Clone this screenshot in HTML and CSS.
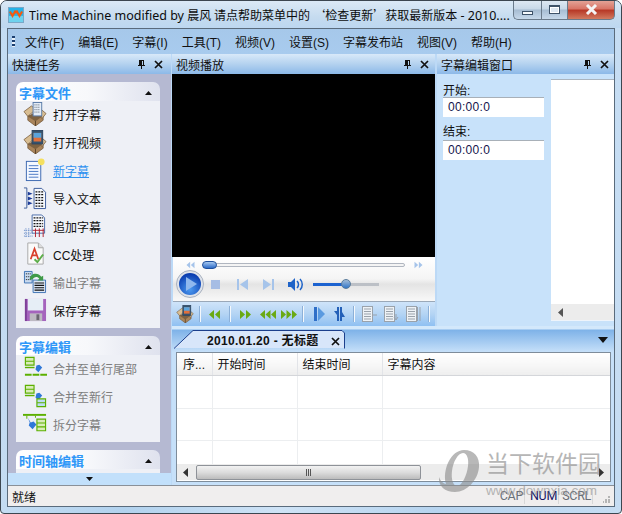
FILE: index.html
```html
<!DOCTYPE html>
<html lang="zh">
<head>
<meta charset="utf-8">
<title>Time Machine</title>
<link rel="stylesheet" href="styles.css">
</head>
<body>
<svg class="defs" width="0" height="0">
  <defs>
    <symbol id="pin" viewBox="0 0 9 11"><path d="M2 1h5v5H6V2H5v4H2zM1 6h7v1H1zM4 7h1v3H4z" fill="#111"/></symbol>
    <symbol id="cross" viewBox="0 0 9 9"><path d="M1 1l7 7M8 1L1 8" stroke="#111" stroke-width="1.7" fill="none"/></symbol>
    <symbol id="up" viewBox="0 0 7 4"><path d="M3.500 0L7 4H0z" fill="#111"/></symbol>
    <symbol id="box" viewBox="0 0 25 25">
      <path d="M5 13l8 5 8-5v6l-8 6-8-6z" fill="#a9845a" stroke="#6a4e2e" stroke-width=".7"/>
      <path d="M13 18v7" stroke="#5b4226"/>
      <path d="M1 10l8-6 4 4-8 7z" fill="#d8bd92" stroke="#6a4e2e" stroke-width=".7"/>
      <path d="M24 12l-6-5-4 5 6 5z" fill="#d8bd92" stroke="#6a4e2e" stroke-width=".7"/>
      <path d="M5 15l8-5 7 5-7 5z" fill="#7d6140"/>
    </symbol>
    <symbol id="double-left" viewBox="0 0 11 11"><path d="M5 1v9L0 5.500zM11 1v9L6 5.500z"/></symbol>
    <symbol id="double-right" viewBox="0 0 11 11"><path d="M0 1v9l5-4.500zM6 1v9l5-4.500z"/></symbol>
    <symbol id="triple-left" viewBox="0 0 16 11"><path d="M5 1v9L0 5.500zM10.500 1v9l-5-4.500zM16 1v9l-5-4.500z"/></symbol>
    <symbol id="triple-right" viewBox="0 0 16 11"><path d="M0 1v9l5-4.500zM5.500 1v9l5-4.500zM11 1v9l5-4.500z"/></symbol>
    <symbol id="doc-lines" viewBox="0 0 15 16">
      <rect x=".5" y=".5" width="10" height="15" fill="#eef2f6" stroke="#9aa2ab"/>
      <path d="M2 3h7M2 5.500h7M2 8h7M2 10.500h7M2 13h7" stroke="#9aa2ab"/>
    </symbol>
  </defs>
</svg>

<div class="window">
  <header class="titlebar">
    <svg class="app-icon" width="16" height="16" viewBox="0 0 16 16">
      <rect width="16" height="16" fill="#25b3e8"/><rect y="9" width="16" height="7" fill="#6ed2ee"/>
      <path d="M1 4l3 5 3-5 1 1 1-1 3 5 3-5" fill="none" stroke="#f25a10" stroke-width="2.400"/>
    </svg>
    <span class="title-text">Time Machine modified by <span class="cjk">晨风 请点帮助菜单中的</span> <span class="cjk">‘检查更新’获取最新版本</span> - 2010....</span>
    <div class="caption-buttons">
      <button class="cap-btn cap-min"><i class="min-glyph"></i></button>
      <button class="cap-btn cap-max"><i class="max-glyph"></i></button>
      <button class="cap-btn cap-close"><svg width="13" height="11" viewBox="0 0 13 11"><path d="M2 1l9 9M11 1l-9 9" stroke="#f4f4f4" stroke-width="3"/></svg></button>
    </div>
  </header>

  <div class="client">
    <nav class="menubar">
      <span class="grip"></span>
      <span class="menu-item">文件(F)</span>
      <span class="menu-item">编辑(E)</span>
      <span class="menu-item">字幕(I)</span>
      <span class="menu-item">工具(T)</span>
      <span class="menu-item">视频(V)</span>
      <span class="menu-item">设置(S)</span>
      <span class="menu-item">字幕发布站</span>
      <span class="menu-item">视图(V)</span>
      <span class="menu-item">帮助(H)</span>
    </nav>

    <div class="workspace">
      <aside class="tasks">
        <div class="pane-head"><span>快捷任务</span><span class="pane-tools"><svg width="9" height="11"><use href="#pin"/></svg><svg width="9" height="9"><use href="#cross"/></svg></span></div>
        <div class="task-scroll">
          <section class="group">
            <h3 class="group-head">字幕文件<svg width="7" height="4"><use href="#up"/></svg></h3>
            <ul class="group-body">
              <li class="task"><svg class="task-icon" viewBox="0 0 25 25"><use href="#box"/><rect x="10.500" y=".5" width="9" height="14" fill="#e4ecf6" stroke="#5b7ca8"/><path d="M12 3h6M12 5.500h6M12 8h6M12 10.500h6" stroke="#56606c" stroke-dasharray="1 1"/></svg>打开字幕</li>
              <li class="task"><svg class="task-icon" viewBox="0 0 25 25"><use href="#box"/><rect x="9.500" y=".5" width="11" height="14" fill="#33536e" stroke="#2e4560"/><rect x="11" y="3" width="8" height="9" fill="#e0703c"/><rect x="11" y="3" width="8" height="5" fill="#5aa4dc"/></svg>打开视频</li>
              <li class="task task-link"><svg class="task-icon" viewBox="0 0 25 25"><rect x="3.500" y="3.500" width="15" height="20" fill="#f4f8ff" stroke="#3c68b0"/><path d="M6 8h10M6 11h10M6 14h10M6 17h10M6 20h10" stroke="#4a78c4"/><circle cx="19" cy="4" r="3.500" fill="#f5e060"/></svg>新字幕</li>
              <li class="task"><svg class="task-icon" viewBox="0 0 25 25"><path d="M1 2h3v21H1" fill="none" stroke="#3c5c9c"/><path d="M5 6l5 2-5 2zM5 11l5 2-5 2zM5 16l5 2-5 2z" fill="#1c3c98"/><path d="M11.500 2.500h8l4 4v17h-12z" fill="#f6f8fc" stroke="#3c5c9c"/><path d="M13 6h9M13 9h9M13 12h9M13 15h9M13 18h9M13 21h9" stroke="#111" stroke-width="1.300" stroke-dasharray="2 1"/></svg>导入文本</li>
              <li class="task"><svg class="task-icon" viewBox="0 0 25 25"><path d="M9.500 1h10l3 3v16h-13z" fill="#f6f8fc" stroke="#4a6ca8"/><path d="M11 4h10M11 7h10M11 10h10M11 13h10" stroke="#111" stroke-width="1.300" stroke-dasharray="2 1"/><path d="M10 17h12M13 15v9M17 15v9M21 15v9" stroke="#b02030"/><path d="M1 17h9M1 20h9M1 23h9M3 15v9M6 15v9" stroke="#5d84c4" stroke-dasharray="1 1"/></svg>追加字幕</li>
              <li class="task"><svg class="task-icon" viewBox="0 0 25 25"><path d="M5 1h11l5 5v17H5z" fill="#fafafa" stroke="#a8a8a8"/><path d="M16 1v5h5" fill="#ddd" stroke="#a8a8a8"/><path d="M8 18l4-11 4 11M9.500 14h5" fill="none" stroke="#d8402c" stroke-width="1.800"/><path d="M12 18l3 3 6-8" fill="none" stroke="#5cae4a" stroke-width="2"/></svg><span>CC处理</span></li>
              <li class="task task-off"><svg class="task-icon" viewBox="0 0 25 25"><path d="M1.500 1.500h8v12h-8z" fill="#c8daf0" stroke="#3f74b4"/><path d="M3 4h5M3 7h5M3 10h5" stroke="#111" stroke-dasharray="1 1"/><path d="M10.500 23.500h13v-13h-13z" fill="#dbe6f4" stroke="#3f74b4"/><path d="M12 13.500h10M12 16h10M12 18.500h10M12 21h10" stroke="#111" stroke-width="1.200"/><path d="M7 10c0-7 9-8 12-3l2-1v5h-6l2-2c-2-3-6-2-7 1z" fill="#3f9a48"/></svg>输出字幕</li>
              <li class="task"><svg class="task-icon" viewBox="0 0 25 25"><rect x="2" y="1" width="22" height="23" fill="#a564bd"/><rect x="2" y="1" width="2" height="23" fill="#7e3f98"/><rect x="5" y="1" width="16" height="12" fill="#e6eef6"/><rect x="7" y="16" width="13" height="8" fill="#bdb9c2"/><rect x="14" y="17" width="3" height="6" fill="#6a6670"/></svg>保存字幕</li>
            </ul>
          </section>
          <section class="group">
            <h3 class="group-head">字幕编辑<svg width="7" height="4"><use href="#up"/></svg></h3>
            <ul class="group-body">
              <li class="task task-off"><svg class="task-icon" viewBox="0 0 25 25"><path d="M2.500 1.500h9v4h-9zM2.500 5.500h9v4h-9z" fill="#d8ecb8" stroke="#5cb000" stroke-width="1.200"/><path d="M2 12h10" stroke="#5cb000" stroke-width="1.500"/><path d="M12 5l2 5 3-1 3 3-4 5-3-3 1-4z" fill="#2f78d8"/><path d="M2 19.500h23" stroke="#5cb000" stroke-width="2" stroke-dasharray="7 1"/></svg>合并至单行尾部</li>
              <li class="task task-off"><svg class="task-icon" viewBox="0 0 25 25"><path d="M2.500 1.500h9v4h-9zM2.500 5.500h9v4h-9z" fill="#d8ecb8" stroke="#5cb000" stroke-width="1.200"/><path d="M2 12h10" stroke="#5cb000" stroke-width="1.500"/><path d="M12 5l2 5 3-1 3 3-4 5-3-3 1-4z" fill="#2f78d8"/><path d="M14.500 15.500h9v4h-9zM14.500 19.500h9v4h-9z" fill="#bcdcf4" stroke="#5cb000" stroke-width="1.200"/></svg>合并至新行</li>
              <li class="task task-off"><svg class="task-icon" viewBox="0 0 25 25"><path d="M0 3h24" stroke="#5cb000" stroke-width="2"/><path d="M4 4v3M13 4v2" stroke="#5cb000"/><path d="M5 6l3 5 3-1 3 3-4 5-4-4 1-3z" fill="#2f78d8"/><path d="M14.500 7.500h9v4h-9zM14.500 11.500h9v4h-9zM14.500 15.500h9v4h-9z" fill="#d8ecb8" stroke="#5cb000" stroke-width="1.200"/></svg>拆分字幕</li>
            </ul>
          </section>
          <section class="group">
            <h3 class="group-head">时间轴编辑<svg width="7" height="4"><use href="#up"/></svg></h3>
            <div class="group-stub"></div>
          </section>
          <div class="more-bar"><svg width="7" height="4" class="flip"><use href="#up"/></svg></div>
        </div>
      </aside>

      <main class="main-col">
        <div class="top-row">
          <section class="player">
            <div class="pane-head"><span>视频播放</span><span class="pane-tools"><svg width="9" height="11"><use href="#pin"/></svg><svg width="9" height="9"><use href="#cross"/></svg></span></div>
            <div class="video"></div>
            <div class="controls">
              <div class="seek-row">
                <svg class="media-faint" width="11" height="8"><use href="#double-left"/></svg>
                <div class="seek-track"><span class="seek-thumb"></span></div>
                <svg class="media-faint" width="11" height="8"><use href="#double-right"/></svg>
              </div>
              <div class="play-row">
                <svg class="play-btn" width="28" height="28" viewBox="0 0 28 28">
                  <defs><radialGradient id="orb" cx=".5" cy=".75" r=".7"><stop offset="0" stop-color="#4c9af0"/><stop offset="1" stop-color="#0a3db0"/></radialGradient></defs>
                  <circle cx="14" cy="14" r="13.500" fill="#dfe3ea" stroke="#a9b2c0"/>
                  <circle cx="14" cy="14" r="11" fill="url(#orb)"/>
                  <path d="M10 7l11 7-11 7z" fill="#8fb8ee"/>
                </svg>
                <span class="stop-btn"></span>
                <svg class="media-faint nav-prev" width="11" height="11" viewBox="0 0 11 11"><path d="M0 0h2v11H0zM11 0v11L3 5.500z"/></svg>
                <svg class="media-faint nav-next" width="11" height="11" viewBox="0 0 11 11"><path d="M11 0H9v11h2zM0 0v11l8-5.500z"/></svg>
                <svg class="vol-icon" width="15" height="13" viewBox="0 0 15 13"><path d="M0 4h3l4-4v13L3 9H0z" fill="#1e63c8"/><path d="M9 3c2 2 2 5 0 7M12 1c3 3 3 8 0 11" fill="none" stroke="#1e63c8" stroke-width="1.500"/></svg>
                <div class="vol-track"><span class="vol-fill"></span><span class="vol-thumb"></span></div>
              </div>
            </div>
            <div class="toolbar">
              <svg class="tool-film" width="18" height="18" viewBox="0 0 25 25"><use href="#box"/><rect x="9.500" y=".5" width="11" height="14" fill="#33536e" stroke="#2e4560"/><rect x="11" y="3" width="8" height="9" fill="#e0703c"/><rect x="11" y="3" width="8" height="5" fill="#5aa4dc"/></svg>
              <i class="tool-sep gap-6"></i>
              <svg class="tool-green gap-8" width="11" height="11"><use href="#double-left"/></svg>
              <i class="tool-sep gap-10"></i>
              <svg class="tool-green gap-9" width="11" height="11"><use href="#double-right"/></svg>
              <svg class="tool-green gap-9" width="16" height="11"><use href="#triple-left"/></svg>
              <svg class="tool-green gap-5" width="16" height="11"><use href="#triple-right"/></svg>
              <i class="tool-sep gap-6"></i>
              <svg class="gap-10" width="11" height="14" viewBox="0 0 11 14"><path d="M0 0h3v14H0z" fill="#2f6fc8"/><path d="M4 0l7 7-7 7z" fill="#5a9ae0"/></svg>
              <svg class="gap-9" width="11" height="14" viewBox="0 0 11 14"><path d="M3 0v4H0l3 4v6h2V0zM8 14v-4h3L8 5V0H6v14z" fill="#2460b8"/></svg>
              <i class="tool-sep gap-9"></i>
              <svg class="gap-7" width="15" height="16" viewBox="0 0 15 16"><use href="#doc-lines"/><path d="M11 9h4" stroke="#9aa2ab"/></svg>
              <svg class="gap-7" width="15" height="16" viewBox="0 0 15 16"><use href="#doc-lines"/><path d="M12 8v5M10 11l2 3 2-3" fill="none" stroke="#9aa2ab"/></svg>
              <svg class="gap-7" width="15" height="16" viewBox="0 0 15 16"><use href="#doc-lines"/><path d="M11.500 1v14M14 1v14" stroke="#9aa2ab"/></svg>
              <i class="tool-sep gap-8"></i>
            </div>
          </section>

          <section class="editor">
            <div class="pane-head"><span>字幕编辑窗口</span><span class="pane-tools"><svg width="9" height="11"><use href="#pin"/></svg><svg width="9" height="9"><use href="#cross"/></svg></span></div>
            <div class="editor-body">
              <div class="time-fields">
                <label class="field-label">开始:</label>
                <div class="time-input">00:00:0</div>
                <label class="field-label">结束:</label>
                <div class="time-input">00:00:0</div>
              </div>
              <div class="text-box">
                <div class="text-scroll"><svg width="6" height="9" viewBox="0 0 6 9"><path d="M5 0v9L0 4.500z" fill="#555"/></svg></div>
              </div>
            </div>
          </section>
        </div>

        <section class="document">
          <div class="tab-strip">
            <div class="tab">
              <svg class="tab-shape" width="171" height="19" viewBox="0 0 171 19"><path d="M0 18L19 .5h149l2.500 2.500V18z" fill="#d8e6fa"/><path d="M0 18.500L19 .5h149l2.500 2.500v15.500" fill="none" stroke="#1c3f8c"/></svg>
              <span class="tab-title">2010.01.20 - 无标题</span>
              <svg class="tab-close" width="9" height="9"><use href="#cross"/></svg>
            </div>
            <svg class="tab-menu" width="10" height="6" viewBox="0 0 10 6"><path d="M0 0h10L5 6z" fill="#111"/></svg>
          </div>
          <div class="grid-frame">
            <table class="grid">
              <thead><tr><th>序...</th><th>开始时间</th><th>结束时间</th><th>字幕内容</th></tr></thead>
              <tbody>
                <tr class="row-a"><td></td><td></td><td></td><td></td></tr>
                <tr class="row-b"><td></td><td></td><td></td><td></td></tr>
                <tr class="row-c"><td></td><td></td><td></td><td></td></tr>
              </tbody>
            </table>
            <div class="h-scroll">
              <svg width="6" height="9" viewBox="0 0 6 9"><path d="M5 0v9L0 4.500z" fill="#333"/></svg>
              <div class="h-thumb"><i></i><i></i><i></i></div>
              <svg class="arrow-right" width="6" height="9" viewBox="0 0 6 9"><path d="M0 0v9l5-4.500z" fill="#333"/></svg>
            </div>
          </div>
        </section>
      </main>
    </div>

    <footer class="statusbar">
      <span class="status-text">就绪</span>
      <span class="indicator">CAP</span>
      <span class="indicator indicator-on">NUM</span>
      <span class="indicator">SCRL</span>
      <svg class="size-grip" width="7" height="7" viewBox="0 0 7 7"><path d="M5 0h2v2H5zM2 3h2v2H2zM5 3h2v2H5zM0 5h1v2H0zM2 5h2v2H2zM5 5h2v2H5z" fill="#b4b4b4"/></svg>
    </footer>
  </div>

  <div class="watermark">
    <svg class="wm-logo" width="44" height="44" viewBox="0 0 44 44">
      <path fill-rule="evenodd" d="M27 1c10 0 16 7 15 17-1 13-12 25-24 25C8 43 1 37 2 28c0 0 2 6 7 7C5 21 14 1 27 1zm-1 3c-5 0-10 9-11 18-1 8 1 15 5 15 5 0 10-11 11-20 1-7-1-13-5-13z" fill="#8d8d8d"/>
    </svg>
    <div class="wm-text">
      <div class="wm-cn">当下软件园</div>
      <div class="wm-en">www.downxia.com</div>
    </div>
  </div>
</div>
</body>
</html>
```

FILE: styles.css
```css
* { box-sizing: border-box; }
html, body { margin: 0; padding: 0; background: #fff; }
body { width: 622px; height: 514px; overflow: hidden; font: 12px "Liberation Sans", "Noto Sans CJK SC", sans-serif; color: #111; }
.defs { position: absolute; }
ul { list-style: none; margin: 0; padding: 0; }
h3 { margin: 0; font-weight: 700; }

.window { position: relative; width: 622px; height: 514px; display: flex; flex-direction: column; border: 1px solid #3c4650; border-radius: 7px 7px 4px 4px; background: linear-gradient(90deg, #c4dcf2 0, #b2d2ee 20%, #cfe3f6 45%, #b7d4ef 70%, #c6ddf3 100%); overflow: hidden; }

.titlebar { height: 27px; flex: none; display: flex; align-items: flex-start; background: linear-gradient(180deg, #dbe9f6 0, #c5dbef 60%, #bdd7f0 100%); }
.app-icon { margin: 6px 5px 0 7px; flex: none; border: 1px solid #7aa8c8; }
.title-text { margin-top: 5px; font: 12.500px/18px "Noto Sans", "Noto Sans CJK SC", sans-serif; white-space: nowrap; width: 484px; overflow: hidden; color: #0c0c0c; }
.cjk { font: 12px/18px "Noto Sans CJK SC", sans-serif; }
.caption-buttons { display: flex; margin-top: -1px; }
.cap-btn { height: 20px; padding: 0; border: 1px solid #6a7a8a; border-top: 0; display: flex; align-items: center; justify-content: center; background: linear-gradient(180deg, #e0eaf4 0, #c8d8e8 48%, #a6bcd2 52%, #c6d8ea 100%); }
.cap-min { width: 28px; border-radius: 0 0 0 5px; border-right: 0; }
.cap-max { width: 26px; border-right: 0; }
.cap-close { width: 48px; border-radius: 0 0 5px 0; background: linear-gradient(180deg, #e4a89c 0, #d87668 45%, #b83a28 55%, #d27a60 100%); }
.min-glyph { width: 11px; height: 4px; border: 1px solid #3e5268; background: #f6f9fc; margin-top: 6px; }
.max-glyph { width: 11px; height: 9px; border: 1px solid #3e5268; border-top-width: 2px; background: #dfe8f2; box-shadow: inset 0 0 0 1px #fff; }

.client { flex: 1; min-height: 0; margin: 0 6px 6px; border: 1px solid #5a6b7c; display: flex; flex-direction: column; background: #bcd9f6; }
.menubar { height: 25px; flex: none; display: flex; align-items: center; padding: 0 0 1px 4px; background: linear-gradient(180deg, #a6c8ea 0, #a8cbee 100%); }
.grip { width: 3px; height: 11px; margin-right: 10px; background: repeating-linear-gradient(180deg, #1c3f70 0 2px, #e8f0f8 2px 4px); }
.menu-item { margin-right: 14px; white-space: nowrap; }

.workspace { flex: 1; min-height: 0; display: flex; }
.pane-head { height: 20px; flex: none; display: flex; align-items: center; justify-content: space-between; padding: 0 6px 0 4px; background: linear-gradient(180deg, #d8e9f9 0, #b8d4f0 45%, #8cb9e8 100%); }
.tasks .pane-head { padding-right: 8px; }
.editor .pane-head { padding-right: 5px; }
.pane-tools { display: flex; align-items: center; gap: 8px; }

.tasks { width: 163px; flex: none; display: flex; flex-direction: column; margin-right: 1px; }
.task-scroll { position: relative; flex: 1; min-height: 0; overflow: hidden; background: #b5b9d2; padding: 8px 11px 0 8px; }
.group { margin-bottom: 8px; }
.group-head { height: 19px; padding: 2px 8px 0 3px; display: flex; align-items: center; justify-content: space-between; font-size: 13px; color: #2e97f8; border-radius: 7px 7px 0 0; background: linear-gradient(90deg, #fff 0, #f7f8fb 50%, #dfe2ee 100%); }
.group-body { background: #eef0f6; padding-bottom: 3px; }
.group-stub { height: 10px; background: #eef0f6; }
.task { height: 28px; display: flex; align-items: center; gap: 6px; padding: 0 0 2px 7px; white-space: nowrap; }
.task-icon { width: 24px; height: 24px; flex: none; }
.task-link { color: #2e90f0; text-decoration: underline; }
.task-off { color: #7d7d7d; }
.more-bar { position: absolute; left: 0; right: 0; bottom: 0; height: 12px; display: flex; align-items: center; justify-content: center; background: #c2e0fb; }
.flip { transform: rotate(180deg); }

.main-col { flex: 1; min-width: 0; display: flex; flex-direction: column; }
.top-row { height: 272px; flex: none; display: flex; }
.player { width: 263px; flex: none; display: flex; flex-direction: column; margin-right: 2px; }
.video { height: 183px; flex: none; background: #000; }
.controls { height: 45px; flex: none; margin-left: 1px; padding: 3px 10px 0 3px; border-bottom: 1px solid #9aa8b8; background: linear-gradient(180deg, #ffffff 0, #f4f4f4 50%, #e4e4e4 62%, #f8f8f8 100%); }
.seek-row { display: flex; align-items: center; height: 9px; padding-left: 9px; }
.seek-track { position: relative; width: 202px; height: 4px; margin: 0 8px 0 7px; border: 1px solid #b0b6c0; border-radius: 2px; background: #f4f4f4; }
.seek-thumb { position: absolute; left: -2px; top: -3px; width: 15px; height: 8px; border-radius: 4px; border: 1px solid #1e4f9c; background: linear-gradient(180deg, #a6c8f0 0, #2e6cc8 100%); }
.media-faint { fill: #a6c4ea; flex: none; }
.play-row { display: flex; align-items: center; height: 30px; }
.play-btn { flex: none; }
.stop-btn { width: 9px; height: 9px; background: #a6bde4; margin-left: 7px; flex: none; }
.nav-prev { margin-left: 17px; }
.nav-next { margin-left: 15px; }
.vol-icon { margin-left: 14px; flex: none; }
.vol-track { position: relative; width: 66px; height: 3px; margin-left: 10px; background: #bcc0c6; }
.vol-fill { position: absolute; left: 0; top: 0; width: 33px; height: 3px; background: #1b62d0; }
.vol-thumb { position: absolute; left: 28px; top: -4px; width: 10px; height: 10px; border-radius: 50%; border: 1px solid #5a7c9c; background: linear-gradient(180deg, #a2bcd8, #3478c8); }
.toolbar { height: 24px; flex: none; display: flex; align-items: center; padding-left: 4px; background: linear-gradient(180deg, #cfe4fa 0, #b4d4f4 50%, #8fc0f2 100%); }
.tool-sep { width: 1px; height: 16px; background: #f4f8fc; box-shadow: -1px 0 0 #8cb0d8; flex: none; }
.tool-green { fill: #6aaa14; flex: none; }
.tool-film { flex: none; }
.gap-5 { margin-left: 5px; }
.gap-6 { margin-left: 6px; }
.gap-7 { margin-left: 7px; }
.gap-8 { margin-left: 8px; }
.gap-9 { margin-left: 9px; }
.gap-10 { margin-left: 10px; }

.editor { flex: 1; min-width: 0; display: flex; flex-direction: column; }
.editor-body { flex: 1; min-height: 0; display: flex; background: #c8e2fa; padding: 5px 0 5px 6px; }
.time-fields { width: 108px; flex: none; }
.field-label { display: block; height: 18px; line-height: 20px; }
.field-label:first-child { line-height: 24px; }
.time-input { width: 101px; height: 20px; margin-bottom: 5px; padding-left: 5px; background: #fff; border-top: 1px solid #a8b0b8; font: 12px/19px "Liberation Sans", sans-serif; color: #14144c; letter-spacing: .3px; }
.text-box { flex: 1; min-width: 0; background: #fff; display: flex; flex-direction: column; justify-content: flex-end; border-top: 1px solid #aab4bf; border-bottom: 1px solid #eef4fb; }
.text-scroll { height: 16px; background: #ececec; display: flex; align-items: center; padding-left: 7px; }

.document { flex: 1; min-height: 0; display: flex; flex-direction: column; background: linear-gradient(180deg, #d3e8fb 0, #d3e8fb 3px, #7eb2e8 4px, #c6e0f9 26px); padding-bottom: 3px; }
.tab-strip { height: 26px; flex: none; display: flex; align-items: flex-end; justify-content: space-between; padding: 0 6px 0 2px; }
.tab { position: relative; width: 171px; height: 19px; margin-bottom: 3px; display: flex; align-items: center; }
.tab-shape { position: absolute; left: 0; top: 0; }
.tab-title { position: relative; margin-left: 33px; font-weight: 700; font-size: 12px; letter-spacing: .3px; white-space: nowrap; }
.tab-close { position: absolute; left: 157px; top: 7px; }
.tab-menu { margin-bottom: 9px; }
.grid-frame { flex: 1; min-height: 0; margin: 0 3px 0 4px; border: 1px solid #7e8c9a; background: #fff; display: flex; flex-direction: column; }
.grid { width: 100%; table-layout: fixed; border-collapse: collapse; flex: none; }
.grid th { height: 22px; padding: 0 0 0 5px; font-weight: 400; text-align: left; border-right: 1px solid #e2e4e8; border-bottom: 1px solid #d4d6da; background: linear-gradient(180deg, #fff 0, #f6f6f6 60%, #eeeeee 100%); white-space: nowrap; }
.grid th:nth-child(1) { width: 35px; padding-left: 6px; }
.grid th:nth-child(2), .grid th:nth-child(3) { width: 85px; }
.grid td { border-right: 1px solid #eceef0; border-bottom: 1px solid #eceef0; }
.grid th:last-child, .grid td:last-child { border-right: 0; }
.row-a td { height: 33px; }
.row-b td { height: 32px; }
.row-c td { height: 24px; border-bottom: 0; }
.h-scroll { height: 17px; flex: none; display: flex; align-items: center; background: #ececec; padding-left: 6px; border-bottom: 1px solid #fff; }
.h-thumb { width: 225px; height: 15px; margin-left: 7px; border: 1px solid #8e9298; border-radius: 2px; display: flex; align-items: center; justify-content: center; gap: 1px; background: linear-gradient(180deg, #f2f2f2 0, #dcdcdc 50%, #bcbcbc 100%); }
.h-thumb i { width: 1px; height: 7px; background: #555; }
.arrow-right { margin-left: auto; margin-right: 5px; }

.statusbar { height: 21px; flex: none; display: flex; align-items: center; background: #f0eeee; border-top: 1px solid #8a9098; padding-left: 4px; }
.status-text { flex: 1; }
.indicator { width: 34px; padding-right: 1px; text-align: right; color: #6a7078; border-right: 1px solid #d8d8d8; font: 12.500px/16px Roboto, sans-serif; letter-spacing: -.3px; }
.indicator-on { color: #141464; }
.size-grip { margin: 6px 4px 0 10px; flex: none; }

.watermark { position: absolute; left: 436px; top: 448px; display: flex; gap: 5px; opacity: .62; pointer-events: none; }
.wm-cn { font: 23px/26px "Noto Sans CJK SC", sans-serif; color: #8a8a8a; }
.wm-en { font: 13.500px/14px "Liberation Sans", sans-serif; color: #8e8e8e; margin-top: 9px; }
```
